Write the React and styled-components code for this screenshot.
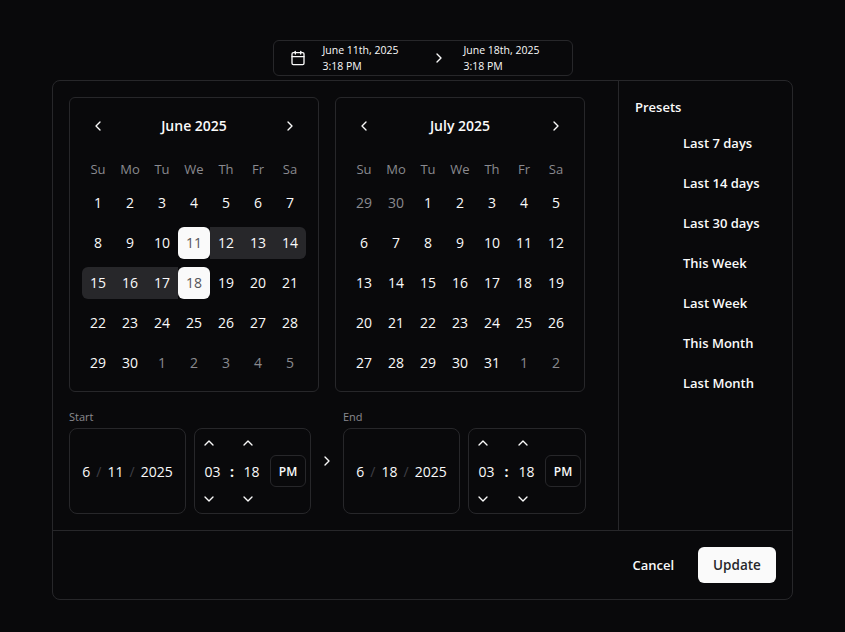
import React from "react";
import styled, { createGlobalStyle } from "styled-components";
import { Calendar, ChevronLeft, ChevronRight, ChevronUp, ChevronDown } from "lucide-react";

const presets = ["Last 7 days", "Last 14 days", "Last 30 days", "This Week", "Last Week", "This Month", "Last Month"];
const weekdays = ["Su", "Mo", "Tu", "We", "Th", "Fr", "Sa"];

const range = (from, to, muted) => {
  const out = [];
  for (let d = from; d <= to; d++) out.push({ d, muted });
  return out;
};

const june = [...range(1, 30), ...range(1, 5, true)];
const july = [...range(29, 30, true), ...range(1, 31), ...range(1, 2, true)];

function juneState(day) {
  if (day.muted) return {};
  if (day.d === 11) return { $selected: "start" };
  if (day.d === 18) return { $selected: "end" };
  if (day.d > 11 && day.d < 18) {
    return { $inRange: true, $roundLeft: day.d === 15, $roundRight: day.d === 14 };
  }
  return {};
}

function Month({ title, days, getState }) {
  return (
    <CalendarCard>
      <CalendarHeader>
        <NavButton><ChevronLeft size={16} /></NavButton>
        <MonthTitle>{title}</MonthTitle>
        <NavButton><ChevronRight size={16} /></NavButton>
      </CalendarHeader>
      <WeekRow>
        {weekdays.map((w) => <WeekDay key={w}>{w}</WeekDay>)}
      </WeekRow>
      <DayGrid>
        {days.map((day, i) => (
          <Day key={i} $muted={day.muted} {...(getState ? getState(day) : {})}>{day.d}</Day>
        ))}
      </DayGrid>
    </CalendarCard>
  );
}

function DateTimeField({ label, month, day, wide }) {
  return (
    <Field>
      <FieldLabel>{label}</FieldLabel>
      <FieldRow>
        <InputBox>
          <DateText>
            <span>{month}</span><Slash>/</Slash><span>{day}</span><Slash>/</Slash><span>2025</span>
          </DateText>
        </InputBox>
        <TimeBox $wide={wide}>
          <Spinners>
            <Spinner>
              <ChevronUp size={16} />
              <TimeValue>03</TimeValue>
              <ChevronDown size={16} />
            </Spinner>
            <Colon $wide={wide}>:</Colon>
            <Spinner>
              <ChevronUp size={16} />
              <TimeValue>18</TimeValue>
              <ChevronDown size={16} />
            </Spinner>
          </Spinners>
          <PeriodButton>PM</PeriodButton>
        </TimeBox>
      </FieldRow>
    </Field>
  );
}

export default function App() {
  return (
    <>
      <GlobalStyle />
      <Page>
        <Trigger>
          <Calendar size={16} />
          <TriggerDate>June 11th, 2025<br />3:18 PM</TriggerDate>
          <ChevronRight size={16} />
          <TriggerDate>June 18th, 2025<br />3:18 PM</TriggerDate>
        </Trigger>
        <Popover>
          <TopSection>
            <MainColumn>
              <Calendars>
                <Month title="June 2025" days={june} getState={juneState} />
                <Month title="July 2025" days={july} />
              </Calendars>
              <Inputs>
                <DateTimeField label="Start" month="6" day="11" />
                <Arrow><ChevronRight size={16} /></Arrow>
                <DateTimeField label="End" month="6" day="18" wide />
              </Inputs>
            </MainColumn>
            <Sidebar>
              <SidebarTitle>Presets</SidebarTitle>
              <PresetList>
                {presets.map((p) => <Preset key={p}>{p}</Preset>)}
              </PresetList>
            </Sidebar>
          </TopSection>
          <Footer>
            <CancelButton>Cancel</CancelButton>
            <UpdateButton>Update</UpdateButton>
          </Footer>
        </Popover>
      </Page>
    </>
  );
}

const GlobalStyle = createGlobalStyle`
  html, body {
    margin: 0;
    background: #09090b;
  }
  body {
    font-family: "Open Sans", "Noto Sans", sans-serif;
    color: #fafafa;
  }
`;

const Page = styled.div`
  width: 845px;
  height: 632px;
  overflow: hidden;
  padding-top: 40px;
  box-sizing: border-box;
  display: flex;
  flex-direction: column;
  align-items: center;
  gap: 4px;
`;

const Trigger = styled.div`
  width: 300px;
  height: 36px;
  box-sizing: border-box;
  border: 1px solid #27272a;
  border-radius: 6px;
  display: flex;
  align-items: center;
  padding: 0 16px;
  gap: 16px;
  & > svg { flex: none; }
`;

const TriggerDate = styled.div`
  font-size: 10.5px;
  line-height: 16px;
  width: 92px;
  padding-left: 1px;
  white-space: nowrap;
`;

const Popover = styled.div`
  width: 741px;
  height: 520px;
  box-sizing: border-box;
  border: 1px solid #27272a;
  border-radius: 8px;
  display: flex;
  flex-direction: column;
`;

const TopSection = styled.div`
  display: flex;
  height: 450px;
  box-sizing: border-box;
  border-bottom: 1px solid #27272a;
`;

const MainColumn = styled.div`
  width: 566px;
  box-sizing: border-box;
  padding: 16px;
  border-right: 1px solid #27272a;
`;

const Calendars = styled.div`
  display: flex;
  gap: 16px;
`;

const CalendarCard = styled.div`
  width: 250px;
  height: 295px;
  box-sizing: border-box;
  border: 1px solid #27272a;
  border-radius: 6px;
  padding: 12px;
`;

const CalendarHeader = styled.div`
  height: 32px;
  display: flex;
  align-items: center;
  justify-content: space-between;
  margin-bottom: 16px;
`;

const NavButton = styled.div`
  width: 32px;
  height: 32px;
  display: flex;
  align-items: center;
  justify-content: center;
`;

const MonthTitle = styled.div`
  font-size: 14px;
  font-weight: 600;
  line-height: 20px;
  padding-bottom: 1px;
`;

const WeekRow = styled.div`
  display: grid;
  grid-template-columns: repeat(7, 32px);
  height: 22px;
  margin-bottom: 7px;
`;

const WeekDay = styled.div`
  display: flex;
  align-items: center;
  justify-content: center;
  font-size: 13px;
  color: #8a8a8f;
`;

const DayGrid = styled.div`
  display: grid;
  grid-template-columns: repeat(7, 32px);
  grid-auto-rows: 32px;
  row-gap: 8px;
`;

const Day = styled.div`
  display: flex;
  align-items: center;
  justify-content: center;
  box-sizing: border-box;
  padding-bottom: 1px;
  font-size: 14px;
  color: ${(p) => (p.$selected ? "#555558" : p.$muted ? "#8a8a8f" : "#fafafa")};
  background: ${(p) => (p.$selected ? "#fafafa" : p.$inRange ? "#27272a" : "transparent")};
  border-radius: ${(p) =>
    p.$selected
      ? "6px"
      : `${p.$roundLeft ? 6 : 0}px ${p.$roundRight ? 6 : 0}px ${p.$roundRight ? 6 : 0}px ${p.$roundLeft ? 6 : 0}px`};
`;

const Inputs = styled.div`
  display: flex;
  align-items: flex-start;
  margin-top: 16px;
`;

const Field = styled.div`
  display: flex;
  flex-direction: column;
`;

const FieldLabel = styled.div`
  font-size: 11px;
  line-height: 16px;
  color: #8a8a8f;
  margin-top: 1px;
  margin-bottom: 3px;
`;

const FieldRow = styled.div`
  display: flex;
  gap: 8px;
`;

const InputBox = styled.div`
  width: 117px;
  height: 86px;
  box-sizing: border-box;
  border: 1px solid #27272a;
  border-radius: 8px;
  display: flex;
  align-items: center;
  justify-content: center;
`;

const DateText = styled.div`
  display: flex;
  font-size: 14px;
  gap: 6px;
  color: #fafafa;
`;

const Slash = styled.span`
  color: #3f3f46;
`;

const TimeBox = styled.div`
  width: ${(p) => (p.$wide ? "118px" : "117px")};
  height: 86px;
  box-sizing: border-box;
  border: 1px solid #27272a;
  border-radius: 8px;
  padding: 0 4px 0 6px;
  display: flex;
  align-items: center;
  justify-content: space-between;
`;

const Spinners = styled.div`
  display: flex;
  align-items: center;
`;

const Spinner = styled.div`
  width: 16px;
  height: 72px;
  display: flex;
  flex-direction: column;
  align-items: center;
  justify-content: space-between;
  color: #fafafa;
`;

const TimeValue = styled.div`
  font-size: 14px;
  margin-left: 7px;
`;

const Colon = styled.div`
  width: ${(p) => (p.$wide ? "24px" : "23px")};
  box-sizing: border-box;
  padding-left: 7px;
  text-align: center;
  font-size: 14px;
  font-weight: 700;
`;

const PeriodButton = styled.div`
  width: 36px;
  height: 32px;
  box-sizing: border-box;
  border: 1px solid #27272a;
  border-radius: 6px;
  display: flex;
  align-items: center;
  justify-content: center;
  font-size: 12px;
  font-weight: 600;
`;

const Arrow = styled.div`
  width: 32px;
  flex: none;
  display: flex;
  justify-content: center;
  margin-top: 45px;
`;

const Sidebar = styled.div`
  flex: 1;
  padding: 16px;
`;

const SidebarTitle = styled.div`
  font-size: 13px;
  font-weight: 600;
  line-height: 20px;
`;

const PresetList = styled.div`
  display: flex;
  flex-direction: column;
  margin-top: 6px;
`;

const Preset = styled.div`
  height: 40px;
  line-height: 40px;
  padding-left: 48px;
  font-size: 13px;
  font-weight: 600;
`;

const Footer = styled.div`
  flex: 1;
  display: flex;
  align-items: center;
  justify-content: flex-end;
  padding: 0 16px;
`;

const CancelButton = styled.div`
  font-size: 13px;
  font-weight: 600;
  margin-right: 24px;
`;

const UpdateButton = styled.div`
  width: 78px;
  height: 36px;
  background: #fafafa;
  color: #27272a;
  border-radius: 6px;
  display: flex;
  align-items: center;
  justify-content: center;
  font-size: 13.5px;
  font-weight: 600;
`;
